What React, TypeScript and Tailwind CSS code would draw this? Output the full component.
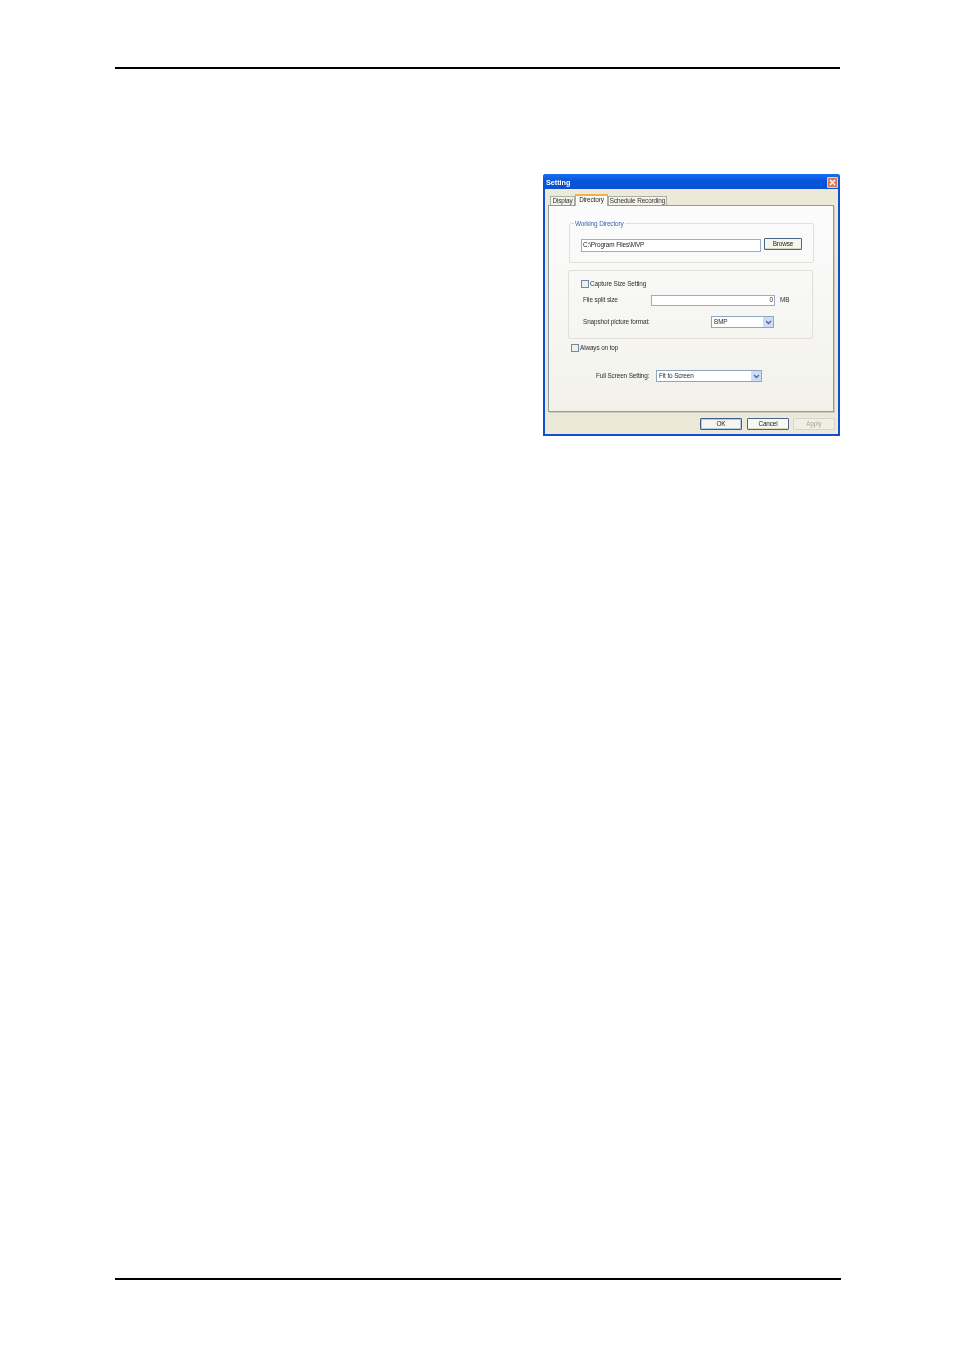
import React from "react";

const font = "font-['Liberation_Sans',Arial,sans-serif]";

const Checkbox = () => (
  <span className="block w-[8px] h-[8px] shrink-0 border border-[#6f8aa4] bg-[#f0f0ea]" />
);

const ComboArrow = () => (
  <span className="w-[10px] h-full flex items-center justify-center bg-[#d0dcf5]">
    <svg width="7" height="5" viewBox="0 0 7 5">
      <path d="M1 1 L3.5 3.5 L6 1" fill="none" stroke="#4a659f" strokeWidth="1.3" />
    </svg>
  </span>
);

const Combo = ({ label, width }: { label: string; width: string }) => (
  <div className={`${width} h-[12px] flex items-center justify-between border border-[#8fa7be] bg-white pl-[2px]`}>
    <span>{label}</span>
    <ComboArrow />
  </div>
);

const Tab = ({ label, active, width }: { label: string; active?: boolean; width: string }) =>
  active ? (
    <div className={`${width} h-[12px] -mb-[1px] z-10 flex items-center justify-center bg-[#fbfbf8] border-x border-[#a9aea9] border-t-2 border-t-[#f0b050] pb-[1px] text-[#222]`}>
      {label}
    </div>
  ) : (
    <div className={`${width} h-[9px] mt-[2px] flex items-center justify-center bg-[#f4f3ea] border-x border-t border-[#a9aea9] text-[#333]`}>
      {label}
    </div>
  );

const DlgButton = ({ label, focused, disabled }: { label: string; focused?: boolean; disabled?: boolean }) => (
  <div
    className={`w-[42px] h-[12px] flex items-center justify-center rounded-[1px] border ${
      disabled
        ? "border-[#d6d4c8] bg-[#f1efe4] text-[#a8a79c]"
        : focused
          ? "border-[#3f5f8a] bg-[#f6f6f0] shadow-[inset_0_0_0_1px_#b4cbe8] text-[#222]"
          : "border-[#4a6688] bg-[#f8f8f3] shadow-[inset_0_-1px_0_#dcd9c9] text-[#222]"
    }`}
  >
    {label}
  </div>
);

function SettingDialog() {
  return (
    <div className="w-[297px] h-[262px] flex flex-col border-x-2 border-b-2 border-[#0f4fd0] rounded-t-[3px] bg-[#ece9d8] text-[6.4px] tracking-[-0.12px] leading-none text-[#2e2e2e] blur-[0.2px]">
      {/* title bar */}
      <div className="h-[15px] -mx-[2px] flex items-center justify-between pl-[3px] pr-[2px] rounded-t-[3px] bg-gradient-to-b from-[#1a6cf0] via-[#0455dc] to-[#0a50d0]">
        <span className="text-white font-bold text-[7.2px] tracking-normal mt-[2px]">Setting</span>
        <span className="w-[11px] h-[11px] flex items-center justify-center rounded-[1px] bg-[#dd7a58] border border-white/60 mt-[1px]">
          <svg width="7" height="7" viewBox="0 0 7 7">
            <path d="M1 1 L6 6 M6 1 L1 6" stroke="#fff" strokeWidth="1.4" />
          </svg>
        </span>
      </div>

      {/* tabs */}
      <div className="flex pl-[5px] mt-[5px] h-[11px] items-end">
        <Tab label="Display" width="w-[25px]" />
        <Tab label="Directory" width="w-[33px]" active />
        <Tab label="Schedule Recording" width="w-[59px]" />
      </div>

      {/* tab panel */}
      <div className="w-[286px] h-[207px] ml-[3px] flex flex-col border border-[#919b9c] bg-gradient-to-b from-[#fcfcfe] to-[#f2f1ea] shadow-[1px_1px_0_#cfccbb] px-[20px]">
        <div className="relative w-[245px] h-[40px] mt-[17px] shrink-0 rounded-[2px] border border-[#e0e0d6] flex items-start pl-[11px] pt-[15px] gap-[3px]">
          <span className="absolute -top-[3px] left-[4px] px-[1px] bg-[#fbfbfa] text-[#3f66ac]">Working Directory</span>
          <div className="w-[180px] h-[13px] flex items-center border border-[#98aec2] bg-white pl-[1px] pb-[1px] text-[#222]">
            C:\Program Files\MVP
          </div>
          <div className="w-[38px] h-[12px] -mt-[1px] flex items-center justify-center rounded-[1px] border border-[#4a6688] bg-[#f6f6f0] shadow-[inset_0_-1px_0_#d8d5c5] text-[#222]">
            Browse
          </div>
        </div>

        <div className="w-[245px] h-[69px] mt-[7px] -ml-[1px] shrink-0 rounded-[2px] border border-[#e0e0d6] flex flex-col pl-[12px]">
          <div className="flex items-center gap-[1px] mt-[9px]">
            <Checkbox />
            <span>Capture Size Setting</span>
          </div>
          <div className="flex items-center mt-[7px] h-[11px] pl-[2px]">
            <span className="w-[68px]">File split size</span>
            <div className="w-[124px] h-[11px] flex items-center justify-end border border-[#98aec2] bg-white pr-[1px]">0</div>
            <span className="ml-[5px]">MB</span>
          </div>
          <div className="flex items-center mt-[10px] h-[12px] pl-[2px]">
            <span className="w-[128px]">Snapshot picture format:</span>
            <Combo label="BMP" width="w-[63px]" />
          </div>
        </div>

        <div className="flex items-center gap-[1px] mt-[5px] ml-[2px]">
          <Checkbox />
          <span>Always on top</span>
        </div>

        <div className="flex items-center mt-[18px] ml-[27px] h-[12px]">
          <span className="w-[60px]">Full Screen Setting:</span>
          <Combo label="Fit to Screen" width="w-[106px]" />
        </div>
      </div>

      {/* dialog buttons */}
      <div className="flex justify-end pr-[3px] mt-[6px]">
        <DlgButton label="OK" focused />
        <div className="w-[5px]" />
        <DlgButton label="Cancel" />
        <div className="w-[4px]" />
        <DlgButton label="Apply" disabled />
      </div>
    </div>
  );
}

export default function App() {
  return (
    <div className={`${font} w-[954px] h-[1350px] bg-white flex flex-col pl-[115px] pr-[113px] pt-[67px]`}>
      <div className="h-[2px] w-[725px] bg-black" />
      <div className="flex justify-end w-[725px] mt-[105px]">
        <SettingDialog />
      </div>
      <div className="h-[2px] w-[726px] bg-black mt-[842px]" />
    </div>
  );
}
